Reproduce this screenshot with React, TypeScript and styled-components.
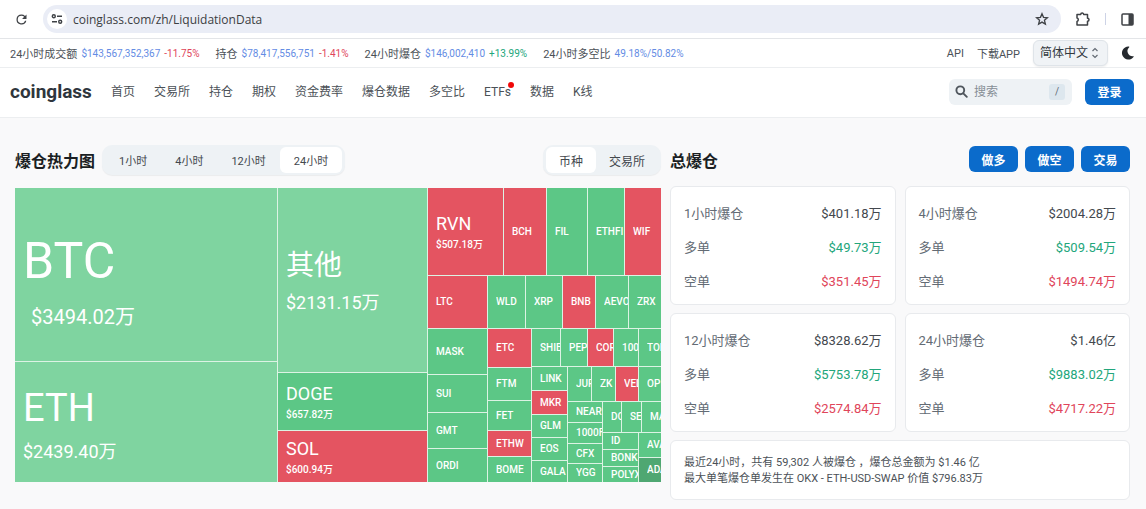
import React from 'react';
import styled, { createGlobalStyle } from 'styled-components';

const GlobalStyle = createGlobalStyle`
  *, *::before, *::after { box-sizing: border-box; }
  body {
    margin: 0;
    background: #f9f9fa;
    color: #4b5157;
    font-family: Roboto, "Noto Sans CJK SC", sans-serif;
    font-size: 12px;
  }
  button, input, select { font-family: inherit; }
  a { color: inherit; text-decoration: none; }
  h2, p, dl, dd, dt { margin: 0; }
`;

/* ---------- browser bar ---------- */

const BrowserBar = styled.div`
  display: flex;
  align-items: center;
  height: 39px;
  padding: 0 12px 0 14px;
  background: #fff;
  border-bottom: 1px solid #e3e5e8;
`;

const IconButton = styled.button`
  display: flex;
  align-items: center;
  justify-content: center;
  flex: none;
  padding: 0;
  border: 0;
  background: none;
  color: #3f4246;
  cursor: pointer;
`;

const AddressBar = styled.div`
  display: flex;
  align-items: center;
  flex: 1;
  height: 28px;
  margin: 0 14px;
  padding: 0 12px 0 4px;
  border-radius: 14px;
  background: #eaedf6;
`;

const SiteInfo = styled(IconButton)`
  width: 20px;
  height: 20px;
  border-radius: 50%;
  background: #fff;
`;

const AddressInput = styled.input`
  flex: 1;
  min-width: 0;
  padding: 0 6px;
  border: 0;
  outline: 0;
  background: none;
  color: #3c4043;
  font-family: "Open Sans", sans-serif;
  font-size: 12px;
`;

const BarDivider = styled.span`
  width: 1px;
  height: 12px;
  margin: 0 15px 0 14px;
  background: #cdd3e6;
`;

/* ---------- ticker ---------- */

const Ticker = styled.div`
  display: flex;
  align-items: center;
  height: 29px;
  padding: 0 12px 0 10px;
  background: #fff;
  border-bottom: 1px solid #eceef0;
  font-size: 11px;
  white-space: nowrap;
`;

const TickerStats = styled.div`
  display: flex;
  gap: 16px;
  flex: 1;
`;

const TickerStat = styled.span`
  display: flex;
  align-items: center;
  gap: 4px;
`;

const tones = { plain: '#43484e', blue: '#648ce4', up: '#22a67b', down: '#e0455a' };
type Tone = keyof typeof tones;

const Figure = styled.span<{ $tone: Tone }>`
  color: ${p => tones[p.$tone]};
  font-size: 10px;
`;

const TickerLinks = styled.div`
  display: flex;
  align-items: center;
  gap: 13px;
`;

const LanguageBox = styled.div`
  position: relative;
  display: flex;
  align-items: center;
  svg {
    position: absolute;
    right: 9px;
    pointer-events: none;
  }
`;

const LanguageSelect = styled.select`
  width: 75px;
  height: 26px;
  padding: 0 6px;
  border: 1px solid #dfe4e9;
  border-radius: 6px;
  background: #f0f3f6;
  box-shadow: 0 1px 2px rgba(20, 30, 40, 0.08);
  color: #32383e;
  font-size: 12px;
  appearance: none;
`;

/* ---------- site navigation ---------- */

const SiteHeader = styled.header`
  display: flex;
  align-items: center;
  height: 50px;
  padding: 0 12px 2px 10px;
  background: #fff;
  border-bottom: 1px solid #eceef0;
`;

const Logo = styled.a`
  width: 101px;
  color: #2f363d;
  font-size: 19px;
  font-weight: 700;
  line-height: 24px;
`;

const Nav = styled.nav`
  display: flex;
  gap: 19px;
  flex: 1;
  white-space: nowrap;
`;

const NavLink = styled.a`
  position: relative;
  line-height: 18px;
`;

const NewDot = styled.i`
  position: absolute;
  top: -1px;
  right: -3px;
  width: 6px;
  height: 6px;
  border-radius: 50%;
  background: #f00808;
`;

const SearchBox = styled.label`
  display: flex;
  align-items: center;
  gap: 6px;
  width: 123px;
  height: 26px;
  margin-right: 13px;
  padding: 0 7px 0 6px;
  border-radius: 6px;
  background: #eef2f5;
  color: #4f565d;
`;

const SearchInput = styled.input`
  flex: 1;
  min-width: 0;
  padding: 0;
  border: 0;
  outline: 0;
  background: none;
  font-size: 12px;
  &::placeholder { color: #868e96; opacity: 1; }
`;

const KeyHint = styled.kbd`
  width: 16px;
  border-radius: 3px;
  background: #dde7ee;
  color: #636b74;
  font-family: inherit;
  font-size: 10px;
  line-height: 16px;
  text-align: center;
`;

const PrimaryButton = styled.button`
  min-width: 49px;
  height: 26px;
  padding: 0 12px;
  border: 0;
  border-radius: 6px;
  background: #0b6bcb;
  color: #fff;
  font-size: 12px;
  font-weight: 700;
  cursor: pointer;
`;

/* ---------- page ---------- */

const Page = styled.main`
  display: grid;
  grid-template-columns: minmax(0, 646fr) minmax(0, 460fr);
  gap: 9px;
  padding: 27px 16px 8px 15px;
`;

const SectionHead = styled.div<{ $gap: number }>`
  display: flex;
  align-items: center;
  justify-content: space-between;
  height: 30px;
  margin-bottom: ${p => p.$gap}px;
`;

const HeadGroup = styled.div`
  display: flex;
  align-items: center;
  gap: 7px;
`;

const ButtonGroup = styled(HeadGroup)`
  padding-bottom: 2px;
`;

const Title = styled.h2`
  padding-top: 3px;
  color: #1b1f23;
  font-size: 16px;
  font-weight: 700;
  line-height: 24px;
  white-space: nowrap;
`;

const Segments = styled.div`
  display: flex;
  padding: 2px 3px;
  border-radius: 10px;
  background: #eef2f5;
  box-shadow: 0 1px 1px rgba(20, 30, 40, 0.06);
`;

const Segment = styled.button<{ $active: boolean; $small?: boolean }>`
  height: 26px;
  padding: ${p => (p.$small ? '0 14px' : '0 13px')};
  border: 0;
  border-radius: 6px;
  background: ${p => (p.$active ? '#fff' : 'none')};
  color: #43484e;
  font-size: ${p => (p.$small ? 11 : 12)}px;
  white-space: nowrap;
  cursor: pointer;
`;

/* ---------- heat map ---------- */

const MapFrame = styled.div`
  display: flex;
  height: 294px;
`;

const Split = styled.div<{ $dir: 'row' | 'column'; $weight: number }>`
  display: flex;
  flex: ${p => p.$weight} 1 0;
  flex-direction: ${p => p.$dir};
  gap: 1px;
  min-width: 0;
  min-height: 0;
  background: #dcf3e4;
`;

type Size = 'xs' | 'sm' | 'md' | 'lg' | 'xl';
const sizes = {
  xs: { label: 10, labelLine: 14, value: 10, valueLine: 14, top: 0, indent: 0 },
  sm: { label: 18, labelLine: 22, value: 10, valueLine: 20, top: 5, indent: 0 },
  md: { label: 28, labelLine: 40, value: 18, valueLine: 34, top: 6, indent: 0 },
  lg: { label: 38, labelLine: 46, value: 18, valueLine: 42, top: 14, indent: 0 },
  xl: { label: 50, labelLine: 62, value: 20, valueLine: 50, top: 22, indent: 8 },
};
const fills = { soft: '#7fd4a0', green: '#5cc786', deep: '#4fa772', red: '#e45461' };

const Tile = styled.div<{ $weight: number; $fill: keyof typeof fills }>`
  display: flex;
  flex: ${p => p.$weight} 1 0;
  align-items: center;
  min-width: 0;
  min-height: 0;
  overflow: hidden;
  background: ${p => fills[p.$fill]};
  color: #fff;
  white-space: nowrap;
`;

const TileText = styled.div<{ $size: Size }>`
  display: flex;
  flex: 1;
  flex-direction: column;
  min-width: 0;
  overflow: hidden;
  padding: ${p => sizes[p.$size].top}px 0 0 8px;
`;

const TileLabel = styled.span<{ $size: Size }>`
  overflow: hidden;
  font-size: ${p => sizes[p.$size].label}px;
  font-weight: ${p => (p.$size === 'xs' ? 500 : 400)};
  line-height: ${p => sizes[p.$size].labelLine}px;
`;

const TileValue = styled.span<{ $size: Size }>`
  padding-left: ${p => sizes[p.$size].indent}px;
  font-size: ${p => sizes[p.$size].value}px;
  font-weight: ${p => (p.$size === 'sm' ? 500 : 400)};
  line-height: ${p => sizes[p.$size].valueLine}px;
`;

type Leaf = { w: number; name: string; value?: string; fill?: keyof typeof fills; size?: Size };
type Branch = { w: number; dir: 'row' | 'column'; items: MapNode[] };
type MapNode = Leaf | Branch;

const t = (w: number, name: string, fill: keyof typeof fills = 'green'): Leaf => ({ w, name, fill });
const row = (w: number, ...items: MapNode[]): Branch => ({ w, dir: 'row', items });
const col = (w: number, ...items: MapNode[]): Branch => ({ w, dir: 'column', items });

const heatmap = row(
  646,
  col(
    262,
    { w: 173, name: 'BTC', value: '$3494.02万', fill: 'soft', size: 'xl' },
    { w: 120, name: 'ETH', value: '$2439.40万', fill: 'soft', size: 'lg' },
  ),
  col(
    149,
    { w: 184, name: '其他', value: '$2131.15万', fill: 'soft', size: 'md' },
    { w: 57, name: 'DOGE', value: '$657.82万', size: 'sm' },
    { w: 51, name: 'SOL', value: '$600.94万', fill: 'red', size: 'sm' },
  ),
  col(
    233,
    row(
      87,
      { w: 75, name: 'RVN', value: '$507.18万', fill: 'red', size: 'sm' },
      t(42, 'BCH', 'red'), t(40, 'FIL'), t(36, 'ETHFI'), t(36, 'WIF', 'red'),
    ),
    row(
      206,
      col(59, t(52, 'LTC', 'red'), t(45, 'MASK'), t(37, 'SUI'), t(35, 'GMT'), t(33, 'ORDI')),
      col(
        173,
        row(52, t(37, 'WLD'), t(36, 'XRP'), t(32, 'BNB', 'red'), t(32, 'AEVO'), t(32, 'ZRX')),
        row(
          153,
          col(43, t(38, 'ETC', 'red'), t(32, 'FTM'), t(29, 'FET'), t(25, 'ETHW', 'red'), t(25, 'BOME')),
          col(
            129,
            row(37, t(28, 'SHIB'), t(26, 'PEPE'), t(25, 'CORE', 'red'), t(24, '1000'), t(22, 'TON')),
            row(
              115,
              col(35, t(23, 'LINK'), t(23, 'MKR', 'red'), t(22, 'GLM'), t(22, 'EOS'), t(21, 'GALA')),
              col(
                93,
                row(34, t(23, 'JUP'), t(23, 'ZK'), t(22, 'VELO', 'red'), t(22, 'OP')),
                row(
                  80,
                  col(34, t(20, 'NEAR'), t(20, '1000F'), t(19, 'CFX'), t(18, 'YGG')),
                  col(
                    58,
                    row(30, t(18, 'DOT'), t(19, 'SEI'), t(19, 'MAV')),
                    row(
                      49,
                      col(35, t(16, 'ID'), t(16, 'BONK'), t(15, 'POLYX')),
                      col(22, t(24, 'AVAX'), t(24, 'ADA', 'deep')),
                    ),
                  ),
                ),
              ),
            ),
          ),
        ),
      ),
    ),
  ),
);

function HeatNode({ node }: { node: MapNode }) {
  if ('items' in node) {
    return (
      <Split $dir={node.dir} $weight={node.w}>
        {node.items.map((item, i) => <HeatNode key={i} node={item} />)}
      </Split>
    );
  }
  const size = node.size ?? 'xs';
  return (
    <Tile $weight={node.w} $fill={node.fill ?? 'green'}>
      <TileText $size={size}>
        <TileLabel $size={size}>{node.name}</TileLabel>
        {node.value && <TileValue $size={size}>{node.value}</TileValue>}
      </TileText>
    </Tile>
  );
}

/* ---------- totals ---------- */

const CardGrid = styled.div`
  display: grid;
  grid-template-columns: 1fr 1fr;
  gap: 8px 9px;
`;

const Card = styled.section`
  border: 1px solid #e8eaed;
  border-radius: 6px;
  background: #fff;
`;

const StatList = styled.dl`
  padding: 10px 13px 5px;
  font-size: 13px;
  line-height: 34px;
`;

const StatRow = styled.div`
  display: flex;
  justify-content: space-between;
`;

const StatName = styled.dt`
  color: #636b74;
`;

const StatValue = styled.dd<{ $tone: Tone }>`
  color: ${p => tones[p.$tone]};
`;

const Summary = styled(Card)`
  grid-column: 1 / -1;
  padding: 14px 13px 12px;
  font-size: 11px;
  line-height: 16px;
`;

const totals = [
  ['1小时爆仓', '$401.18万', '$49.73万', '$351.45万'],
  ['4小时爆仓', '$2004.28万', '$509.54万', '$1494.74万'],
  ['12小时爆仓', '$8328.62万', '$5753.78万', '$2574.84万'],
  ['24小时爆仓', '$1.46亿', '$9883.02万', '$4717.22万'],
];

const navItems = ['首页', '交易所', '持仓', '期权', '资金费率', '爆仓数据', '多空比', 'ETFs', '数据', 'K线'];

export default function App() {
  const [period, setPeriod] = React.useState('24小时');
  const [kind, setKind] = React.useState('币种');
  return (
    <>
      <GlobalStyle />
      <BrowserBar>
        <IconButton aria-label="刷新">
          <svg width="15" height="15" viewBox="0 0 24 24" fill="currentColor">
            <path d="M17.65 6.35A7.96 7.96 0 0 0 12 4a8 8 0 1 0 7.73 10h-2.08A6 6 0 1 1 12 6c1.66 0 3.14.69 4.22 1.78L13 11h7V4z" />
          </svg>
        </IconButton>
        <AddressBar>
          <SiteInfo aria-label="网站信息">
            <svg width="12" height="12" viewBox="0 0 12 12" fill="none" stroke="currentColor" strokeWidth="1.4">
              <circle cx="2.8" cy="3.2" r="1.5" />
              <path d="M6 3.2h5M1 8.8h5" />
              <circle cx="9.2" cy="8.8" r="1.5" />
            </svg>
          </SiteInfo>
          <AddressInput aria-label="地址" defaultValue="coinglass.com/zh/LiquidationData" />
          <IconButton aria-label="收藏">
            <svg width="14" height="14" viewBox="0 0 24 24" fill="none" stroke="currentColor" strokeWidth="2.3">
              <path d="m12 3 2.6 6.2 6.7.6-5.1 4.4 1.6 6.6-5.8-3.5-5.8 3.5 1.6-6.6-5.1-4.4 6.7-.6z" />
            </svg>
          </IconButton>
        </AddressBar>
        <IconButton aria-label="扩展程序">
          <svg width="16" height="16" viewBox="0 0 16 16" fill="none" stroke="currentColor" strokeWidth="1.5" strokeLinejoin="round">
            <path d="M2 3.5h3.7a1.5 1.5 0 0 1 3 0h3.8v3.8a1.5 1.5 0 0 1 0 3v3.7H2v-3.6a1.7 1.7 0 0 0 0-3.3z" />
          </svg>
        </IconButton>
        <BarDivider />
        <IconButton aria-label="侧边栏">
          <svg width="13" height="13" viewBox="0 0 13 13">
            <rect x="1" y="1" width="11" height="11" rx="1" fill="none" stroke="currentColor" strokeWidth="1.5" />
            <path d="M7.5 1H12v11H7.5z" fill="currentColor" />
          </svg>
        </IconButton>
      </BrowserBar>

      <Ticker>
        <TickerStats>
          <TickerStat>24小时成交额 <Figure $tone="blue">$143,567,352,367</Figure><Figure $tone="down">-11.75%</Figure></TickerStat>
          <TickerStat>持仓 <Figure $tone="blue">$78,417,556,751</Figure><Figure $tone="down">-1.41%</Figure></TickerStat>
          <TickerStat>24小时爆仓 <Figure $tone="blue">$146,002,410</Figure><Figure $tone="up">+13.99%</Figure></TickerStat>
          <TickerStat>24小时多空比 <Figure $tone="blue">49.18%/50.82%</Figure></TickerStat>
        </TickerStats>
        <TickerLinks>
          <a href="#api">API</a>
          <a href="#app">下载APP</a>
          <LanguageBox>
            <LanguageSelect aria-label="语言" defaultValue="zh">
              <option value="zh">简体中文</option>
              <option value="en">English</option>
            </LanguageSelect>
            <svg width="8" height="12" viewBox="0 0 8 12" fill="none" stroke="#636b74" strokeWidth="1.2">
              <path d="m1.5 4L4 1.5 6.5 4M1.5 8 4 10.5 6.5 8" />
            </svg>
          </LanguageBox>
          <IconButton aria-label="深色模式">
            <svg width="13" height="14" viewBox="0 0 13 14" fill="#25292e">
              <path d="M7.2.5a6.5 6.5 0 1 0 5.5 10.3.4.4 0 0 0-.4-.6A5.2 5.2 0 0 1 8.2 1.2.4.4 0 0 0 8 .6z" />
            </svg>
          </IconButton>
        </TickerLinks>
      </Ticker>

      <SiteHeader>
        <Logo href="#home">coinglass</Logo>
        <Nav>
          {navItems.map(item => (
            <NavLink key={item} href={`#${item}`}>
              {item}
              {item === 'ETFs' && <NewDot />}
            </NavLink>
          ))}
        </Nav>
        <SearchBox>
          <svg width="13" height="13" viewBox="0 0 13 13" fill="none" stroke="currentColor" strokeWidth="1.9" strokeLinecap="round">
            <circle cx="5.3" cy="5.3" r="3.9" />
            <path d="m8.3 8.3 3.5 3.5" />
          </svg>
          <SearchInput aria-label="搜索" placeholder="搜索" />
          <KeyHint>/</KeyHint>
        </SearchBox>
        <PrimaryButton>登录</PrimaryButton>
      </SiteHeader>

      <Page>
        <div>
          <SectionHead $gap={13}>
            <HeadGroup>
              <Title>爆仓热力图</Title>
              <Segments>
                {['1小时', '4小时', '12小时', '24小时'].map(p => (
                  <Segment key={p} $small $active={p === period} onClick={() => setPeriod(p)}>{p}</Segment>
                ))}
              </Segments>
            </HeadGroup>
            <Segments>
              {['币种', '交易所'].map(k => (
                <Segment key={k} $active={k === kind} onClick={() => setKind(k)}>{k}</Segment>
              ))}
            </Segments>
          </SectionHead>
          <MapFrame>
            <HeatNode node={heatmap} />
          </MapFrame>
        </div>

        <div>
          <SectionHead $gap={11}>
            <Title>总爆仓</Title>
            <ButtonGroup>
              <PrimaryButton>做多</PrimaryButton>
              <PrimaryButton>做空</PrimaryButton>
              <PrimaryButton>交易</PrimaryButton>
            </ButtonGroup>
          </SectionHead>
          <CardGrid>
            {totals.map(([name, total, long, short]) => (
              <Card key={name}>
                <StatList>
                  <StatRow><StatName>{name}</StatName><StatValue $tone="plain">{total}</StatValue></StatRow>
                  <StatRow><StatName>多单</StatName><StatValue $tone="up">{long}</StatValue></StatRow>
                  <StatRow><StatName>空单</StatName><StatValue $tone="down">{short}</StatValue></StatRow>
                </StatList>
              </Card>
            ))}
            <Summary>
              <p>最近24小时，共有 59,302 人被爆仓 ，爆仓总金额为 $1.46 亿</p>
              <p>最大单笔爆仓单发生在 OKX - ETH-USD-SWAP 价值 $796.83万</p>
            </Summary>
          </CardGrid>
        </div>
      </Page>
    </>
  );
}
